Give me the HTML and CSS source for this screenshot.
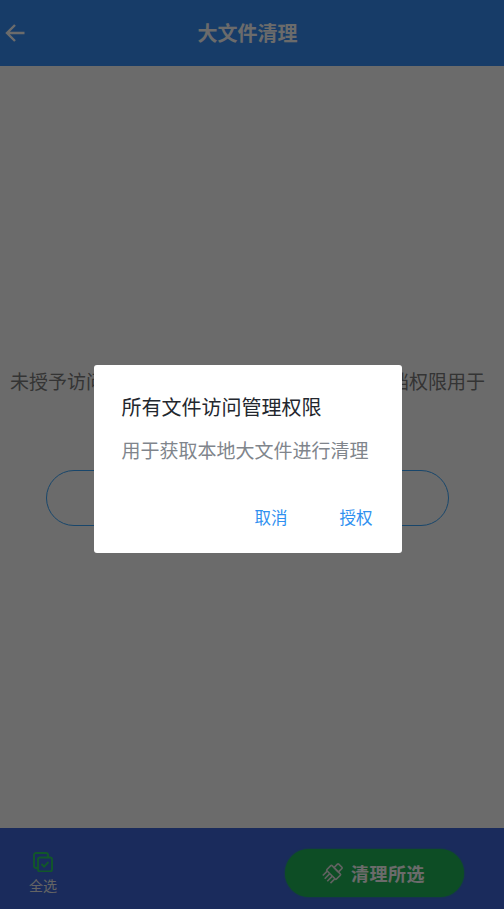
FILE: index.html
```html
<!DOCTYPE html>
<html lang="zh">
<head>
<meta charset="utf-8">
<title>大文件清理</title>
<link rel="stylesheet" href="styles.css">
</head>
<body>
<div class="app">
  <header class="topbar">
    <svg class="back" viewBox="0 0 20 20" width="20" height="20"><path d="M19.5 10H2M10 2l-8 8 8 8" fill="none" stroke="#fff" stroke-width="2.4"/></svg>
    <h1 class="title">大文件清理</h1>
  </header>
  <main class="content">
    <p class="notice">未授予访问所有文件的管理权限&#xFF0C;需要读取文档权限用于获取本地大文件</p>
    <button class="outline">去授权</button>
  </main>
  <footer class="bottombar">
    <div class="selectall">
      <svg viewBox="0 0 20 20" width="20" height="20"><path d="M4.5 16H3a2 2 0 0 1-2-2V3a2 2 0 0 1 2-2h10a2 2 0 0 1 2 2v2" fill="none" stroke="#2ad062" stroke-width="1.9"/><rect x="5" y="5.5" width="14" height="14" rx="2" fill="none" stroke="#2ad062" stroke-width="1.9"/><path d="M8.5 12l2.6 2.6 4.4-4.6" fill="none" stroke="#2ad062" stroke-width="1.9"/></svg>
      <span>全选</span>
    </div>
    <button class="clean">
      <svg viewBox="0 0 20 20" width="18" height="18"><g fill="none" stroke="#e8e8e8" stroke-width="1.8" transform="rotate(45 10 10)"><rect x="6.5" y="-1.5" width="7" height="6.5" rx="1"/><rect x="2.5" y="5" width="15" height="8" rx="1"/><path d="M4 13v7M8 13v8M12 13v8M16 13v7"/></g></svg>
      <span>清理所选</span>
    </button>
  </footer>
</div>
<div class="scrim">
  <div class="dialog">
    <h2 class="dialog-title">所有文件访问管理权限</h2>
    <p class="dialog-text">用于获取本地大文件进行清理</p>
    <div class="dialog-actions">
      <button class="action">取消</button>
      <button class="action">授权</button>
    </div>
  </div>
</div>
</body>
</html>
```
FILE: styles.css
```css
* { box-sizing: border-box; }
html, body { margin: 0; height: 100%; }
body { font-family: "Noto Sans CJK SC", "Noto Sans", sans-serif; background: #fff; overflow: hidden; }
button { font-family: inherit; background: none; border: 0; padding: 0; }
.app { height: 909px; display: flex; flex-direction: column; }
.topbar { height: 66px; flex: none; background: #378ff8; display: flex; align-items: center; padding: 0 9px 0 0; position: relative; }
.back { position: absolute; left: 5px; top: 23px; }
.title { margin: 0; width: 100%; text-align: center; color: #fff; font-size: 20px; font-weight: 700; line-height: 28px; }
.content { flex: 1; padding: 0 9px 0 0; display: flex; flex-direction: column; align-items: center; justify-content: flex-start; }
.notice { margin: 300px 0 0; width: 480px; text-align: center; font-size: 19px; line-height: 29px; color: #7c7c7c; }
.outline { margin-top: 46px; width: 403px; height: 56px; border: 1px solid #3aa8ff; border-radius: 28px; font-size: 18px; color: #3aa8ff; }
.bottombar { height: 81px; flex: none; background: #3e66dc; display: flex; align-items: center; justify-content: space-between; padding: 8px 40px 0 28px; }
.selectall { width: 30px; display: flex; flex-direction: column; align-items: center; color: #fff; font-size: 14px; line-height: 18px; }
.selectall span { color: #eee; white-space: nowrap; margin-top: 4px; }
.clean { width: 179px; height: 48px; border-radius: 24px; background: #20b858; box-shadow: 0 0 2px #20b858; color: #fff; font-size: 18px; font-weight: 700; letter-spacing: .5px; display: flex; align-items: center; justify-content: center; gap: 9px; }
.clean svg { overflow: visible; }
.scrim { position: fixed; inset: 0; background: rgba(0,0,0,.58); display: flex; align-items: center; justify-content: center; padding: 9px 9px 0 0; }
.dialog { width: 308px; height: 188px; background: #fff; border-radius: 3px; padding: 26px 28px 0; display: flex; flex-direction: column; }
.dialog-title { margin: 0; font-size: 20px; font-weight: 400; line-height: 32px; color: #23272e; }
.dialog-text { margin: 13px 0 0; font-size: 19px; line-height: 28px; color: #80858c; }
.dialog-actions { margin: 41px 1px 0 0; display: flex; justify-content: flex-end; gap: 52px; }
.action { font-size: 16.5px; line-height: 24px; color: #2f90f0; }
```
